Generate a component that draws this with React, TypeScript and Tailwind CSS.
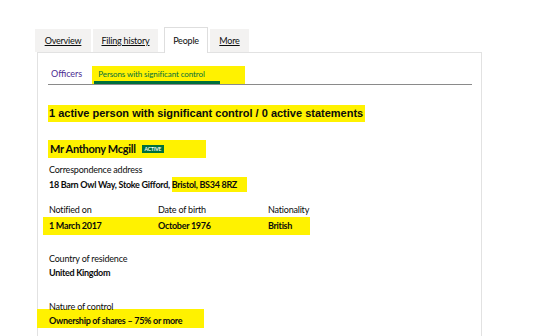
import React from 'react';

const HL = 'bg-[#fff200]';
const LABEL = 'text-[9px] leading-[14px] tracking-[-0.2px]';
const VALUE = 'text-[9px] leading-[14px] font-bold tracking-[-0.3px]';

export default function App() {
  return (
    <div className="w-[540px] h-[336px] overflow-hidden bg-white text-[#0b0c0c] font-['Lato','Liberation_Sans',sans-serif]">
      <div className="pt-[27px] pl-[35px]">
        {/* top tabs */}
        <div className="flex items-end text-[9px] tracking-[-0.2px]">
          <div className="w-[56px] h-[23px] bg-[#f3f2f1] flex items-center justify-center underline">Overview</div>
          <div className="ml-[2px] w-[65px] h-[23px] bg-[#f3f2f1] flex items-center justify-center underline">Filing history</div>
          <div className="relative z-10 -mb-px ml-[6px] w-[44px] h-[26px] bg-white border border-b-0 border-[#dedede] flex items-center justify-center">People</div>
          <div className="ml-[2px] w-[39px] h-[23px] bg-[#f3f2f1] flex items-center justify-center underline">More</div>
        </div>

        {/* panel */}
        <div className="ml-[2px] w-[445px] h-[300px] border border-b-0 border-[#e2e2e2] pl-[10px] pr-[9px]">
          <div className="h-[32px] border-b border-[#8a8a8a] flex items-end">
            <div className="h-[17px] flex items-center pl-[3px] text-[9px] text-[#4c2c92] mb-[2px]">Officers</div>
            <div className={`ml-[10px] w-[153px] h-[18px] ${HL} flex flex-col justify-between pl-[6px]`}>
              <div className="pt-[3px] text-[8px] leading-[10px] tracking-[-0.1px] text-[#00703c]">Persons with significant control</div>
              <div className="w-[126px] h-[3px] bg-[#00703c] -ml-[4px]" />
            </div>
          </div>

          <div className="mt-[20px] flex">
            <div className={`${HL} pl-px pr-[2px] h-[17px] leading-[17px] font-['Liberation_Sans',Arial,sans-serif] font-bold text-[11px]`}>
              1 active person with significant control / 0 active statements
            </div>
          </div>

          <div className="mt-[18px] flex">
            <div className={`flex items-center w-[158px] h-[18px] ${HL} pl-[2px]`}>
              <span className="font-bold text-[11px] tracking-[-0.3px]">Mr Anthony Mcgill</span>
              <span className="ml-[6px] bg-[#00703c] text-white text-[5px] font-bold px-[3px] h-[8px] leading-[8px] tracking-tight">ACTIVE</span>
            </div>
          </div>

          <div className="mt-[5px] pl-[1px]">
            <div className={LABEL}>Correspondence address</div>
            <div className={`${VALUE} flex items-center`}>
              <span>18 Barn Owl Way, Stoke Gifford,&nbsp;</span>
              <span className={`${HL} pr-[10px] h-[15px] leading-[15px]`}>Bristol, BS34 8RZ</span>
            </div>
          </div>

          <div className="mt-[11px] -ml-[5px]">
            <div className={`flex pl-[6px] ${LABEL}`}>
              <div className="w-[109px]">Notified on</div>
              <div className="w-[110px]">Date of birth</div>
              <div>Nationality</div>
            </div>
            <div className={`flex w-[267px] h-[18px] items-center ${HL} pl-[6px] ${VALUE}`}>
              <div className="w-[109px]">1 March 2017</div>
              <div className="w-[110px]">October 1976</div>
              <div>British</div>
            </div>
          </div>

          <div className="mt-[17px] pl-[1px]">
            <div className={LABEL}>Country of residence</div>
            <div className={VALUE}>United Kingdom</div>
          </div>

          <div className="mt-[20px] pl-[1px]">
            <div className={`relative z-10 ${LABEL}`}>Nature of control</div>
            <div className={`-mt-[5px] -ml-[12px] w-[167px] h-[19px] flex items-center pt-[4px] ${HL} pl-[12px] ${VALUE}`}>
              Ownership of shares – 75% or more
            </div>
          </div>
        </div>
      </div>
    </div>
  );
}
